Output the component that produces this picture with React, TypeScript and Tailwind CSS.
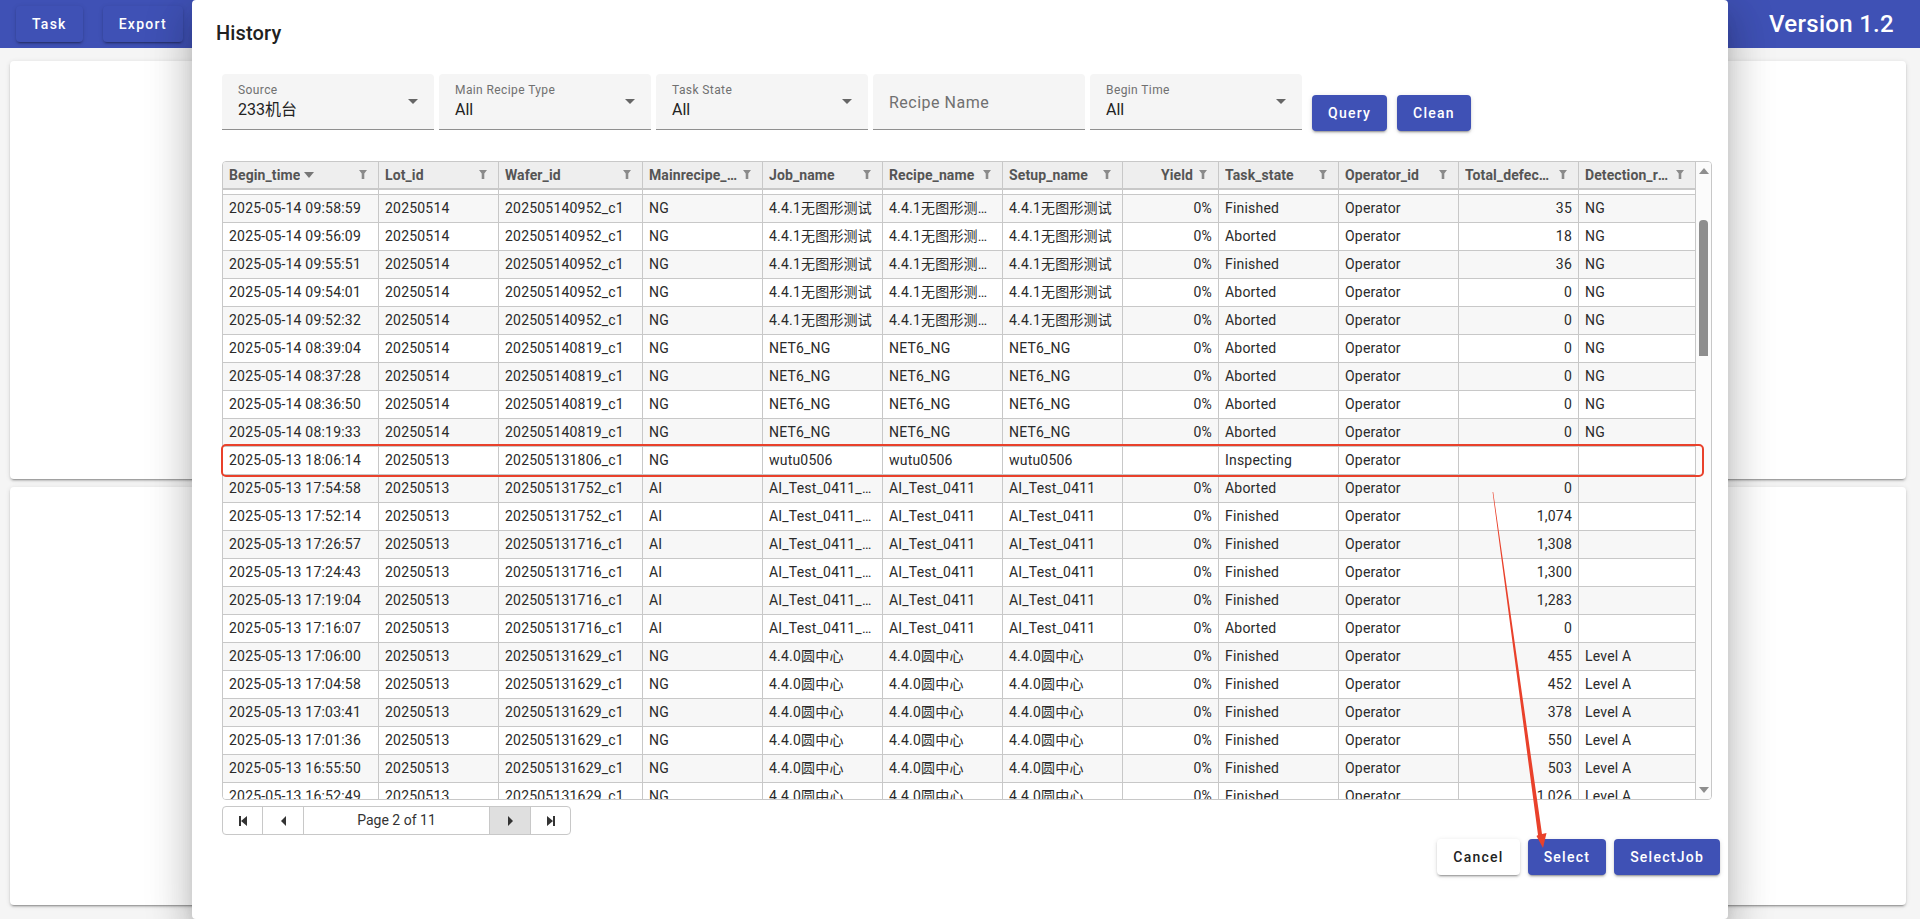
const elevated = "shadow-[0_3px_1px_-2px_rgba(0,0,0,0.2),0_2px_2px_0_rgba(0,0,0,0.14),0_1px_5px_0_rgba(0,0,0,0.12)]";

const columns = [
  { title: "Begin_time", width: "w-[156px]", sorted: true },
  { title: "Lot_id", width: "w-[120px]" },
  { title: "Wafer_id", width: "w-[144px]" },
  { title: "Mainrecipe_type", width: "w-[120px]" },
  { title: "Job_name", width: "w-[120px]" },
  { title: "Recipe_name", width: "w-[120px]" },
  { title: "Setup_name", width: "w-[120px]" },
  { title: "Yield", width: "w-[96px]", right: true },
  { title: "Task_state", width: "w-[120px]" },
  { title: "Operator_id", width: "w-[120px]" },
  { title: "Total_defect_count", width: "w-[120px]", right: true },
  { title: "Detection_result", width: "w-[117px]" },
];

const wuTuLong = ["4.4.1无图形测试", "4.4.1无图形测试_1", "4.4.1无图形测试"];
const net6 = ["NET6_NG", "NET6_NG", "NET6_NG"];
const aiTest = ["AI_Test_0411_new", "AI_Test_0411", "AI_Test_0411"];
const circle = ["4.4.0圆中心", "4.4.0圆中心", "4.4.0圆中心"];

function row(time: string, lot: string, wafer: string, type: string, names: string[], yieldText: string, state: string, total: string, result: string) {
  return [time, lot, wafer, type, ...names, yieldText, state, "Operator", total, result];
}

const rows = [
  row("2025-05-14 09:58:59", "20250514", "202505140952_c1", "NG", wuTuLong, "0%", "Finished", "35", "NG"),
  row("2025-05-14 09:56:09", "20250514", "202505140952_c1", "NG", wuTuLong, "0%", "Aborted", "18", "NG"),
  row("2025-05-14 09:55:51", "20250514", "202505140952_c1", "NG", wuTuLong, "0%", "Finished", "36", "NG"),
  row("2025-05-14 09:54:01", "20250514", "202505140952_c1", "NG", wuTuLong, "0%", "Aborted", "0", "NG"),
  row("2025-05-14 09:52:32", "20250514", "202505140952_c1", "NG", wuTuLong, "0%", "Aborted", "0", "NG"),
  row("2025-05-14 08:39:04", "20250514", "202505140819_c1", "NG", net6, "0%", "Aborted", "0", "NG"),
  row("2025-05-14 08:37:28", "20250514", "202505140819_c1", "NG", net6, "0%", "Aborted", "0", "NG"),
  row("2025-05-14 08:36:50", "20250514", "202505140819_c1", "NG", net6, "0%", "Aborted", "0", "NG"),
  row("2025-05-14 08:19:33", "20250514", "202505140819_c1", "NG", net6, "0%", "Aborted", "0", "NG"),
  row("2025-05-13 18:06:14", "20250513", "202505131806_c1", "NG", ["wutu0506", "wutu0506", "wutu0506"], "", "Inspecting", "", ""),
  row("2025-05-13 17:54:58", "20250513", "202505131752_c1", "AI", aiTest, "0%", "Aborted", "0", ""),
  row("2025-05-13 17:52:14", "20250513", "202505131752_c1", "AI", aiTest, "0%", "Finished", "1,074", ""),
  row("2025-05-13 17:26:57", "20250513", "202505131716_c1", "AI", aiTest, "0%", "Finished", "1,308", ""),
  row("2025-05-13 17:24:43", "20250513", "202505131716_c1", "AI", aiTest, "0%", "Finished", "1,300", ""),
  row("2025-05-13 17:19:04", "20250513", "202505131716_c1", "AI", aiTest, "0%", "Finished", "1,283", ""),
  row("2025-05-13 17:16:07", "20250513", "202505131716_c1", "AI", aiTest, "0%", "Aborted", "0", ""),
  row("2025-05-13 17:06:00", "20250513", "202505131629_c1", "NG", circle, "0%", "Finished", "455", "Level A"),
  row("2025-05-13 17:04:58", "20250513", "202505131629_c1", "NG", circle, "0%", "Finished", "452", "Level A"),
  row("2025-05-13 17:03:41", "20250513", "202505131629_c1", "NG", circle, "0%", "Finished", "378", "Level A"),
  row("2025-05-13 17:01:36", "20250513", "202505131629_c1", "NG", circle, "0%", "Finished", "550", "Level A"),
  row("2025-05-13 16:55:50", "20250513", "202505131629_c1", "NG", circle, "0%", "Finished", "503", "Level A"),
  row("2025-05-13 16:52:49", "20250513", "202505131629_c1", "NG", circle, "0%", "Finished", "1,026", "Level A"),
];

const filters = [
  { label: "Source", value: "233机台" },
  { label: "Main Recipe Type", value: "All" },
  { label: "Task State", value: "All" },
  { placeholder: "Recipe Name" },
  { label: "Begin Time", value: "All" },
];

function Button({ children, light }: { children: string; light?: boolean }) {
  return (
    <button className={`h-9 px-4 pb-[1px] rounded-[4px] text-sm font-medium tracking-[1.25px] ${elevated} ${light ? "bg-white text-[#222]" : "bg-[#3f51b5] text-white"}`}>
      {children}
    </button>
  );
}

function Triangle({ className, points }: { className: string; points: string }) {
  return (
    <svg viewBox="0 0 10 10" preserveAspectRatio="none" className={className}>
      <polygon points={points} fill="currentColor" />
    </svg>
  );
}

function Funnel() {
  return (
    <svg viewBox="0 0 8 9" className="w-2 h-[9px] shrink-0 ml-[6px] mr-[11px] -mt-[2px] text-[#8a8a8a]">
      <polygon points="0,0 8,0 5.3,3.6 5.3,9 2.7,9 2.7,3.6" fill="currentColor" />
    </svg>
  );
}

function HistoryGrid() {
  return (
    <div className="ml-[30px] mt-[30px] w-[1490px] h-[639px] flex border border-[#c8c8c8] rounded-[4px] overflow-hidden tracking-[0.2px]">
      <div className="w-[1473px] flex flex-col">
        <div className="flex h-[28px] shrink-0 bg-[#eeeeee] border-b-2 border-[#c8c8c8] tracking-[0.1px]">
          {columns.map((c) => (
            <div key={c.title} className={`${c.width} shrink-0 flex items-center pl-[6px] border-r border-[#c8c8c8] font-bold text-[#555]`}>
              <span className={`min-w-0 truncate ${c.sorted ? "" : "flex-1"} ${c.right ? "text-right" : ""}`}>{c.title}</span>
              {c.sorted && <Triangle className="w-[10px] h-[6px] ml-[4px] text-[#777]" points="0,0 10,0 5,10" />}
              {c.sorted && <span className="flex-1" />}
              <Funnel />
            </div>
          ))}
        </div>
        <div className="flex-1 min-h-0 overflow-hidden">
          <div className="flex h-[28px] -mt-[23px] border-b border-[#c8c8c8]">
            {columns.map((c) => (
              <div key={c.title} className={`${c.width} shrink-0 border-r border-[#c8c8c8]`} />
            ))}
          </div>
          {rows.map((r, i) => (
            <div key={r[0]} className={`flex h-[28px] border-b border-[#c8c8c8] ${i % 2 === 0 ? "bg-[#f7f7f7]" : "bg-white"}`}>
              {r.map((text, j) => (
                <div key={j} className={`${columns[j].width} shrink-0 px-[6px] leading-[26px] truncate border-r border-[#c8c8c8] text-[#2a2a2a] ${columns[j].right ? "text-right" : ""}`}>
                  {text}
                </div>
              ))}
            </div>
          ))}
        </div>
      </div>
      <div className="w-[15px] flex flex-col items-center pt-[6px] pb-[6px] bg-[#fbfbfb] text-[#8e8e8e]">
        <Triangle className="w-[10px] h-[6px] shrink-0" points="5,0 10,10 0,10" />
        <div className="w-[9px] h-[136px] mt-[46px] rounded-t-[4px] bg-[#8e8e8e]" />
        <Triangle className="w-[10px] h-[6px] shrink-0 mt-auto" points="0,0 10,0 5,10" />
      </div>
    </div>
  );
}

function Pager() {
  return (
    <div className="ml-[30px] mt-[6px] w-[349px] h-[29px] flex border border-[#c8c8c8] rounded-[4px] overflow-hidden text-[#333]">
      <div className="w-[39px] flex items-center justify-center">
        <svg viewBox="0 0 8 10" className="w-2 h-[10px]"><path d="M0 0h2v10H0zM8 0v10L2 5z" fill="currentColor" /></svg>
      </div>
      <div className="w-[41px] flex items-center justify-center border-l border-[#c8c8c8]">
        <svg viewBox="0 0 5 10" className="w-[5px] h-[10px]"><path d="M5 0v10L0 5z" fill="currentColor" /></svg>
      </div>
      <div className="w-[186px] flex items-center justify-center border-l border-[#c8c8c8] pb-[2px]">Page 2 of 11</div>
      <div className="w-[41px] flex items-center justify-center border-l border-[#c8c8c8] bg-[#dfdfdf]">
        <svg viewBox="0 0 5 10" className="w-[5px] h-[10px]"><path d="M0 0v10l5-5z" fill="currentColor" /></svg>
      </div>
      <div className="w-[40px] flex items-center justify-center border-l border-[#c8c8c8]">
        <svg viewBox="0 0 8 10" className="w-2 h-[10px]"><path d="M8 0H6v10h2zM0 0v10l6-5z" fill="currentColor" /></svg>
      </div>
    </div>
  );
}

function HistoryDialog() {
  return (
    <div className="absolute left-[192px] top-0 w-[1536px] h-[919px] bg-white rounded-[4px] shadow-[0_11px_15px_-7px_rgba(0,0,0,0.2),0_24px_38px_3px_rgba(0,0,0,0.14),0_9px_46px_8px_rgba(0,0,0,0.12)]">
      <h2 className="pl-6 pt-[17px] text-[20px] leading-[32px] font-medium tracking-[0.15px] text-[#212121]">History</h2>
      <div className="flex pl-[30px] mt-[25px]">
        {filters.map((f) => (
          <div key={f.label ?? f.placeholder} className="w-[212px] h-[56px] mr-[5px] flex items-center justify-between pl-4 pr-4 pt-[2px] bg-[#f5f5f5] rounded-t-[4px] border-b border-[#8f8f8f]">
            {f.placeholder ? (
              <span className="text-base tracking-[0.5px] text-[#707070]">{f.placeholder}</span>
            ) : (
              <>
                <div>
                  <div className="text-xs leading-[14px] tracking-[0.4px] text-[#707070]">{f.label}</div>
                  <div className="text-base leading-6 mt-[1px] text-[#222]">{f.value}</div>
                </div>
                <Triangle className="w-[10px] h-[5px] -mt-[2px] text-[#666]" points="0,0 10,0 5,10" />
              </>
            )}
          </div>
        ))}
        <div className="flex gap-[10px] ml-[5px] mt-[21px] h-9">
          <Button>Query</Button>
          <Button>Clean</Button>
        </div>
      </div>
      <HistoryGrid />
      <Pager />
      <div className="flex justify-end gap-2 pr-2 mt-[4px]">
        <Button light>Cancel</Button>
        <Button>Select</Button>
        <Button>SelectJob</Button>
      </div>
    </div>
  );
}

export default function App() {
  return (
    <div className="relative h-screen overflow-hidden bg-[#f5f5f5] text-sm font-[Roboto,'Noto_Sans_CJK_SC',sans-serif]">
      <header className="h-12 bg-[#3f51b5] flex items-center justify-between pl-4 pr-[26px] text-white">
        <div className="flex gap-5">
          <Button>Task</Button>
          <Button>Export</Button>
        </div>
        <span className="text-2xl font-medium tracking-[0.3px]">Version 1.2</span>
      </header>
      <main className="pl-[10px] pr-[14px] pt-[13px] flex flex-col gap-2">
        <div className={`h-[418px] bg-white rounded-[4px] ${elevated}`} />
        <div className={`h-[418px] bg-white rounded-[4px] ${elevated}`} />
      </main>
      <HistoryDialog />
      {/* red annotation drawn over the screenshot */}
      <div className="absolute left-[221px] top-[444px] w-[1483px] h-[33px] border-2 border-[#e9412b] rounded-[5px] pointer-events-none" />
      <svg className="absolute inset-0 w-[1920px] h-[919px] pointer-events-none" viewBox="0 0 1920 919">
        <polygon points="1492.6,492 1493.2,492 1542,834 1546.5,833 1543,848 1536.5,836 1538,835" fill="#e9412b" />
      </svg>
    </div>
  );
}
